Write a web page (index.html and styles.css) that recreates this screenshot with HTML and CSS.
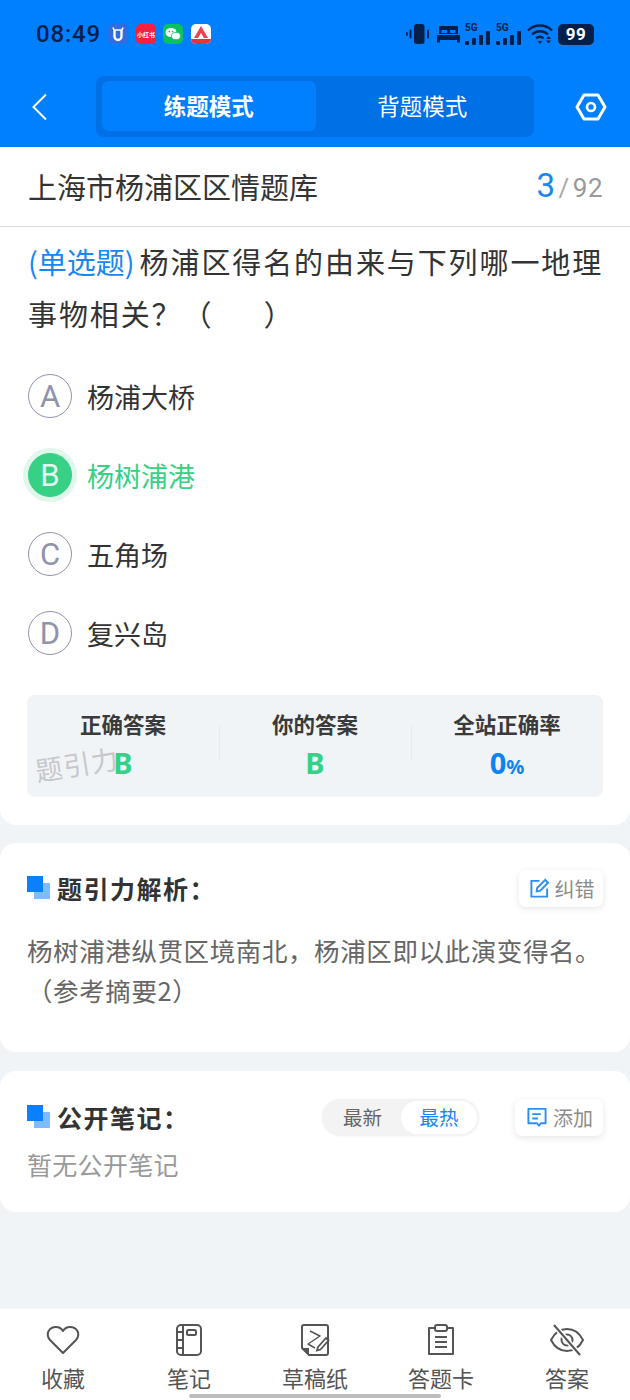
FILE: index.html
```html
<!DOCTYPE html>
<html lang="zh">
<head>
<meta charset="utf-8">
<title>题库</title>
<link rel="stylesheet" href="styles.css">
</head>
<body>
<div class="page">
  <header class="header">
    <div class="status">
      <div class="status-left">
        <span class="time">08:49</span>
        <span class="app app-blue"><svg viewBox="0 0 20 20" width="20" height="20"><path d="M5 3.500 6 6h8l1-2.500" fill="none" stroke="#fff" stroke-width="1.600"/><path d="M6.500 6.500v6a3.500 3.500 0 0 0 7 0v-6" fill="none" stroke="#fff" stroke-width="2.400"/></svg></span>
        <span class="app app-red">小红书</span>
        <span class="app app-green"><svg viewBox="0 0 20 20" width="20" height="20"><ellipse cx="8" cy="8.500" rx="5.500" ry="4.500" fill="#fff"/><ellipse cx="13" cy="12" rx="4.500" ry="3.700" fill="#fff" stroke="#0cc160" stroke-width=".8"/><circle cx="6.200" cy="7.500" r=".8" fill="#0cc160"/><circle cx="9.600" cy="7.500" r=".8" fill="#0cc160"/></svg></span>
        <span class="app app-white"><svg viewBox="0 0 20 20" width="20" height="20"><path d="M10 2 3 14h4l3-5 3 5h4z" fill="#f0404a"/><rect x="0" y="15" width="20" height="5" fill="#e8323e"/></svg></span>
      </div>
      <div class="status-right">
        <svg viewBox="0 0 26 20" width="26" height="20"><rect x="8" y="0" width="10.500" height="20" rx="2.500" fill="#04204a"/><rect x="3.500" y="5.500" width="2" height="9" rx="1" fill="#04204a"/><rect x="0" y="8" width="1.800" height="4" rx=".9" fill="#04204a"/><rect x="21" y="5.500" width="2" height="9" rx="1" fill="#04204a"/></svg>
        <svg viewBox="0 0 23 18" width="23" height="18"><path d="M3 1h17a1 1 0 0 1 1 1v7H2V2a1 1 0 0 1 1-1zM0 10h23v7.500h-3V15H3v2.500H0z" fill="#04204a"/><rect x="4.500" y="5" width="5.500" height="3" fill="#0080ff"/><rect x="13" y="5" width="5.500" height="3" fill="#0080ff"/></svg>
        <span class="signal"><b>5G</b><i class="b1"></i><i class="b2"></i><i class="b3"></i><i class="b4"></i></span>
        <span class="signal"><b>5G</b><i class="b1"></i><i class="b2"></i><i class="b3"></i><i class="b4"></i></span>
        <svg viewBox="0 0 26 20" width="26" height="20"><path d="M1 6.500a17 17 0 0 1 24 0M5 10.500a11.500 11.500 0 0 1 16 0M9 14.300a6 6 0 0 1 7.500 0" fill="none" stroke="#04204a" stroke-width="2.400"/><path d="M10.500 17h5L13 20zM19 15l2.500-3 2.500 3zM19 16.500h5L21.500 19.500z" fill="#04204a"/></svg>
        <span class="battery">99</span>
      </div>
    </div>
    <nav class="nav">
      <svg class="back" viewBox="0 0 18 28" width="18" height="28"><path d="M15 1.500 2.500 14 15 26.500" fill="none" stroke="#fff" stroke-width="2"/></svg>
      <div class="tabs">
        <span class="tab tab-on">练题模式</span>
        <span class="tab">背题模式</span>
      </div>
      <svg class="gear" viewBox="0 0 32 28" width="32" height="28"><path d="M9 2h14l7 12-7 12H9L2 14z" fill="none" stroke="#fff" stroke-width="3" stroke-linejoin="round"/><circle cx="16" cy="14" r="4" fill="none" stroke="#fff" stroke-width="2.600"/></svg>
    </nav>
  </header>

  <div class="card card-main">
    <div class="title-row">
      <span class="title">上海市杨浦区区情题库</span>
      <span class="count"><em>3</em><span class="slash">/</span>92</span>
    </div>
    <div class="question"><span class="qtype">(单选题)</span>杨浦区得名的由来与下列哪一地理事物相关？（&nbsp;&nbsp;&nbsp;&nbsp;&nbsp;&nbsp;）</div>
    <ul class="options">
      <li class="option"><span class="letter">A</span>杨浦大桥</li>
      <li class="option option-on"><span class="letter">B</span>杨树浦港</li>
      <li class="option"><span class="letter">C</span>五角场</li>
      <li class="option"><span class="letter">D</span>复兴岛</li>
    </ul>
    <div class="stats">
      <div class="stat"><span class="stat-label">正确答案</span><span class="stat-val green">B</span></div>
      <div class="stat"><span class="stat-label">你的答案</span><span class="stat-val green">B</span></div>
      <div class="stat"><span class="stat-label">全站正确率</span><span class="stat-val blue">0<small>%</small></span></div>
      <span class="mark">题引力</span>
    </div>
  </div>

  <section class="card card-analysis">
    <div class="sec-head">
      <h2 class="sec-title"><span class="squares"></span>题引力解析：</h2>
      <span class="pill"><svg viewBox="0 0 22 22" width="21" height="21"><path d="M11 3H2.500v16.500H19V11" fill="none" stroke="#2f8fef" stroke-width="2"/><path d="M8.500 10.500 17 2l3 3-8.500 8.500-3.500.5z" fill="none" stroke="#2f8fef" stroke-width="2"/></svg>纠错</span>
    </div>
    <p class="analysis">杨树浦港纵贯区境南北，杨浦区即以此演变得名。（参考摘要2）</p>
  </section>

  <section class="card card-notes">
    <div class="sec-head">
      <h2 class="sec-title"><span class="squares"></span>公开笔记：</h2>
      <div class="sec-tools">
        <div class="seg"><span class="seg-item">最新</span><span class="seg-item seg-on">最热</span></div>
        <span class="pill pill-wide"><svg viewBox="0 0 22 22" width="22" height="21"><path d="M2 2h18v15h-5l-2 2.500-2-2.500H2z" fill="none" stroke="#2f8fef" stroke-width="2" stroke-linejoin="round"/><path d="M6 7.500h9M6 12h6" stroke="#2f8fef" stroke-width="2"/></svg>添加</span>
      </div>
    </div>
    <p class="empty">暂无公开笔记</p>
  </section>

  <footer class="tabbar">
    <div class="bar-item"><svg viewBox="0 0 34 32" width="34" height="32"><path d="M17 29 4 16C-1 10 3 3 10 3c3 0 5.500 1.500 7 4 1.500-2.500 4-4 7-4 7 0 11 7 6 13z" fill="none" stroke="#555" stroke-width="2" stroke-linejoin="round"/></svg><span>收藏</span></div>
    <div class="bar-item"><svg viewBox="0 0 28 32" width="28" height="32"><rect x="2" y="1" width="24" height="30" rx="4" fill="none" stroke="#555" stroke-width="2"/><path d="M8 1v30M2 8h6M2 16h6M2 24h6" stroke="#555" stroke-width="2"/><rect x="12" y="6" width="9" height="5" rx="1.500" fill="none" stroke="#555" stroke-width="2"/></svg><span>笔记</span></div>
    <div class="bar-item"><svg viewBox="0 0 30 32" width="30" height="32"><path d="M9 31 2 24V3a2 2 0 0 1 2-2h22a2 2 0 0 1 2 2v26a2 2 0 0 1-2 2z" fill="none" stroke="#555" stroke-width="2" stroke-linejoin="round"/><path d="M2 24h7v7z" fill="#555"/><path d="M10 7l10 5-12 8 7 4" fill="none" stroke="#555" stroke-width="1.500" stroke-linejoin="round"/><path d="m18 23 8-9 2.500 2.500-8 9-3.500 1z" fill="#fff" stroke="#555" stroke-width="1.800"/></svg><span>草稿纸</span></div>
    <div class="bar-item"><svg viewBox="0 0 28 32" width="28" height="32"><path d="M8 4H2v26h24V4h-6" fill="none" stroke="#555" stroke-width="2" stroke-linejoin="round"/><rect x="8" y="1" width="12" height="6" rx="2" fill="none" stroke="#555" stroke-width="2"/><path d="M8 13h12M8 18h12M8 23h12" stroke="#555" stroke-width="2"/></svg><span>答题卡</span></div>
    <div class="bar-item"><svg viewBox="0 0 36 32" width="36" height="32"><path d="M2 16C6 8 12 5 18 5s12 3 16 11c-4 8-10 11-16 11S6 24 2 16z" fill="none" stroke="#555" stroke-width="2"/><circle cx="18" cy="16" r="5.500" fill="none" stroke="#555" stroke-width="2"/><path d="M5 1 31 31" stroke="#fff" stroke-width="5"/><path d="M5 1 31 31" stroke="#555" stroke-width="2"/></svg><span>答案</span></div>
    <span class="home-bar"></span>
  </footer>
</div>
</body>
</html>
```

FILE: styles.css
```css
* { box-sizing: border-box; margin: 0; padding: 0; }
html, body { width: 630px; height: 1400px; overflow: hidden; }
body { font-family: "Noto Sans CJK SC", "Noto Sans", sans-serif; background: #f1f4f7; color: #333; }
.page { position: relative; width: 630px; height: 1400px; display: flex; flex-direction: column; }

.header { height: 147px; background: #0080ff; display: flex; flex-direction: column; }
.status { height: 76px; padding: 8px 36px 0 36px; display: flex; justify-content: space-between; align-items: flex-start; }
.status-left { display: flex; align-items: center; gap: 7.500px; height: 52px; }
.time { font: 500 24px/1 Roboto, sans-serif; color: #04204a; letter-spacing: .8px; }
.app { width: 20px; height: 20px; border-radius: 5px; display: flex; align-items: center; justify-content: center; overflow: hidden; }
.app-blue { background: #2f6de0; }
.app-red { background: #f5203f; color: #fff; font-size: 6px; font-weight: 700; white-space: nowrap; }
.app-green { background: #0cc160; }
.app-white { background: #fff; }
.status-right { display: flex; align-items: center; gap: 5px; height: 52px; }
.signal { position: relative; width: 26px; height: 21px; display: block; }
.signal b { position: absolute; left: 0; top: -2px; font: 700 10px/11px Roboto, sans-serif; color: #04204a; }
.signal i { position: absolute; bottom: 0; width: 4px; background: #04204a; border-radius: 1px; }
.signal .b1 { left: 0; height: 4px; }
.signal .b2 { left: 7px; height: 7px; }
.signal .b3 { left: 14px; height: 10px; }
.signal .b4 { left: 21px; height: 14px; }
.battery { width: 36px; height: 21px; border-radius: 5px; background: #04204a; color: #fff; font: 700 17px/21px Roboto, sans-serif; text-align: center; letter-spacing: .5px; }

.nav { height: 61px; display: flex; align-items: center; }
.back { margin-left: 31px; flex: none; }
.tabs { flex: none; width: 438px; height: 61px; margin-left: 47px; background: #0070e6; border-radius: 8px; padding: 5px 5px 6px 6px; display: flex; }
.tab { flex: 1; display: flex; align-items: center; justify-content: center; border-radius: 7px; color: #fff; font-size: 22.500px; padding-bottom: 3px; }
.tab-on { background: #0080ff; font-weight: 700; }
.gear { margin-left: 41px; flex: none; }

.card { background: #fff; }
.card-main { height: 678px; border-radius: 0 0 16px 16px; padding: 0 27px; }
.title-row { height: 80px; margin: 0 -27px; padding: 0 27px 2px 28px; border-bottom: 1px solid #dcdcdc; display: flex; align-items: center; justify-content: space-between; }
.title { font-size: 29px; color: #333; }
.count { font: 400 26px/1 Roboto, sans-serif; color: #999; letter-spacing: .5px; }
.count em { font-style: normal; font-size: 33px; color: #1a86f0; }
.slash { margin: 0 3px; color: #aaa; }
.question { margin: 8px -6px 0 1px; font-size: 29px; line-height: 52px; letter-spacing: 1.900px; color: #333; }
.qtype { color: #1a86f0; letter-spacing: 0; margin-right: 5px; }
.options { list-style: none; margin-top: 35px; display: flex; flex-direction: column; gap: 35px; }
.option { display: flex; align-items: center; gap: 15px; height: 44px; font-size: 27px; color: #333; }
.letter { width: 44px; height: 44px; margin-left: 1px; border-radius: 50%; border: 1.800px solid #8f93ab; color: #8f93ab; display: flex; align-items: center; justify-content: center; font: 400 31px/1 Roboto, sans-serif; flex: none; }
.option-on { color: #36d184; }
.option-on .letter { background: #36d184; border-color: #36d184; color: #e4f9ee; box-shadow: 0 0 0 5px #e1f7ec; }
.stats { position: relative; margin-top: 40px; height: 102px; background: #f1f4f7; border-radius: 8px; display: flex; padding-top: 15px; }
.stat { flex: 1; display: flex; flex-direction: column; align-items: center; position: relative; }
.stat + .stat::before { content: ""; position: absolute; left: 0; top: 15px; height: 36px; border-left: 1px solid #e6e9ed; }
.stat-label { font-size: 21.500px; font-weight: 700; line-height: 28px; color: #3a3a3a; }
.stat-val { font: 700 29px/34px "Noto Sans", sans-serif; margin-top: 8px; }
.stat-val small { font-size: 20px; }
.green { color: #36d184; }
.blue { color: #0a84f5; }
.mark { position: absolute; left: 8px; top: 52px; font-size: 27px; line-height: 34px; color: #c6c8cb; transform: rotate(-9deg); letter-spacing: 1px; }

.card-analysis { height: 209px; margin-top: 18px; border-radius: 16px; padding: 26px 27px 0; }
.card-notes { height: 141px; margin-top: 19px; border-radius: 16px; padding: 27px 27px 0; }
.sec-head { display: flex; justify-content: space-between; align-items: center; height: 38px; }
.sec-title { font-size: 25px; font-weight: 700; color: #333; display: flex; align-items: center; gap: 7px; letter-spacing: 1.500px; padding-bottom: 1px; }
.squares { width: 23px; height: 23px; display: block; flex: none; background: linear-gradient(#0a80ff, #0a80ff) 0 0 / 16px 16px no-repeat, linear-gradient(#7dbcff, #7dbcff) 7px 7px / 16px 16px no-repeat; }
.sec-tools { display: flex; align-items: center; gap: 36px; }
.pill { height: 37px; width: 84px; background: #fff; border-radius: 7px; box-shadow: 0 2px 7px rgba(0, 0, 0, .1); display: flex; align-items: center; justify-content: center; gap: 5px; font-size: 20px; color: #8c8c8c; padding-left: 1px; }
.pill-wide { width: 88px; }
.analysis { margin-top: 23px; font-size: 25.500px; line-height: 40px; color: #666; letter-spacing: .6px; }
.empty { margin-top: 10px; font-size: 25px; line-height: 36px; color: #999; letter-spacing: .3px; }
.seg { width: 157px; height: 37px; border-radius: 19px; background: #f3f3f3; padding: 2px; display: flex; box-shadow: 0 0 3px rgba(0, 0, 0, .06); }
.seg-item { width: 76px; display: flex; align-items: center; justify-content: center; font-size: 19.500px; color: #666; border-radius: 17px; padding-bottom: 1px; }
.seg-item:first-child { flex: 1; }
.seg-on { background: #fff; color: #1a86f0; }

.tabbar { position: absolute; left: 0; right: 0; bottom: 0; height: 91px; background: #fff; display: grid; grid-template-columns: repeat(5, 1fr); }
.bar-item { display: flex; flex-direction: column; align-items: center; padding-top: 15px; font-size: 22px; color: #555; }
.bar-item svg { height: 32px; display: block; }
.bar-item span { margin-top: 5px; line-height: 32px; }
.home-bar { position: absolute; left: 189px; bottom: 2px; width: 252px; height: 4px; border-radius: 2px; background: #bdbdbd; }
```
